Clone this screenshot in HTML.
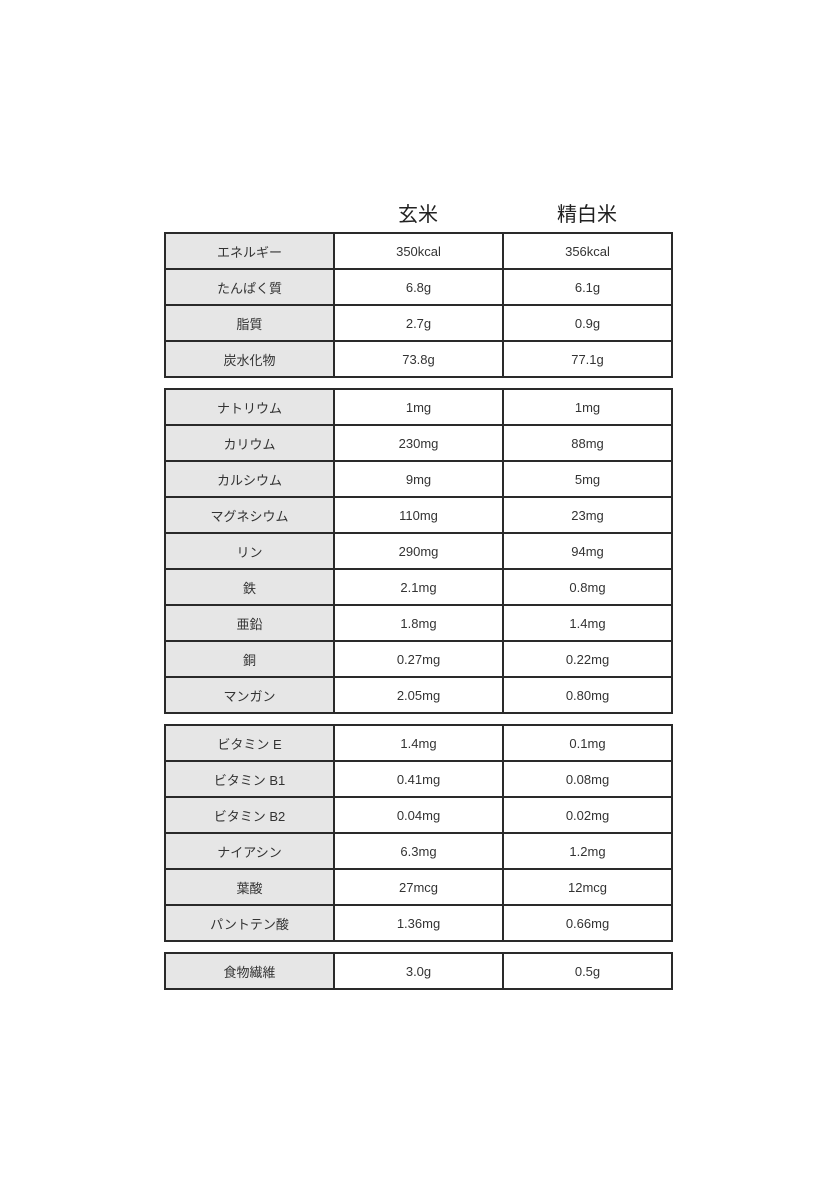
<!DOCTYPE html>
<html><head><meta charset="utf-8"><style>
body{margin:0;width:835px;height:1186px;background:#fff;position:relative;font-family:"Liberation Sans","Noto Sans CJK JP",sans-serif;color:#333}
.h{position:absolute;top:198px;font-size:20px;width:170px;text-align:center;color:#222}
.t{position:absolute;left:164px;width:505px;padding:2px;background:#2a2a2a;display:grid;grid-template-columns:167px 167px 167px;grid-auto-rows:34px;gap:2px}
.t div{background:#fff;display:flex;align-items:center;justify-content:center;font-size:13px}
.t div:nth-child(3n+1){background:#e6e6e6}
</style></head><body>
<div class="h" style="left:333px">玄米</div>
<div class="h" style="left:502px">精白米</div>
<div class="t" style="top:232px">
<div>エネルギー</div><div>350kcal</div><div>356kcal</div>
<div>たんぱく質</div><div>6.8g</div><div>6.1g</div>
<div>脂質</div><div>2.7g</div><div>0.9g</div>
<div>炭水化物</div><div>73.8g</div><div>77.1g</div>
</div>
<div class="t" style="top:388px">
<div>ナトリウム</div><div>1mg</div><div>1mg</div>
<div>カリウム</div><div>230mg</div><div>88mg</div>
<div>カルシウム</div><div>9mg</div><div>5mg</div>
<div>マグネシウム</div><div>110mg</div><div>23mg</div>
<div>リン</div><div>290mg</div><div>94mg</div>
<div>鉄</div><div>2.1mg</div><div>0.8mg</div>
<div>亜鉛</div><div>1.8mg</div><div>1.4mg</div>
<div>銅</div><div>0.27mg</div><div>0.22mg</div>
<div>マンガン</div><div>2.05mg</div><div>0.80mg</div>
</div>
<div class="t" style="top:724px">
<div>ビタミン E</div><div>1.4mg</div><div>0.1mg</div>
<div>ビタミン B1</div><div>0.41mg</div><div>0.08mg</div>
<div>ビタミン B2</div><div>0.04mg</div><div>0.02mg</div>
<div>ナイアシン</div><div>6.3mg</div><div>1.2mg</div>
<div>葉酸</div><div>27mcg</div><div>12mcg</div>
<div>パントテン酸</div><div>1.36mg</div><div>0.66mg</div>
</div>
<div class="t" style="top:952px">
<div>食物繊維</div><div>3.0g</div><div>0.5g</div>
</div>
</body></html>
